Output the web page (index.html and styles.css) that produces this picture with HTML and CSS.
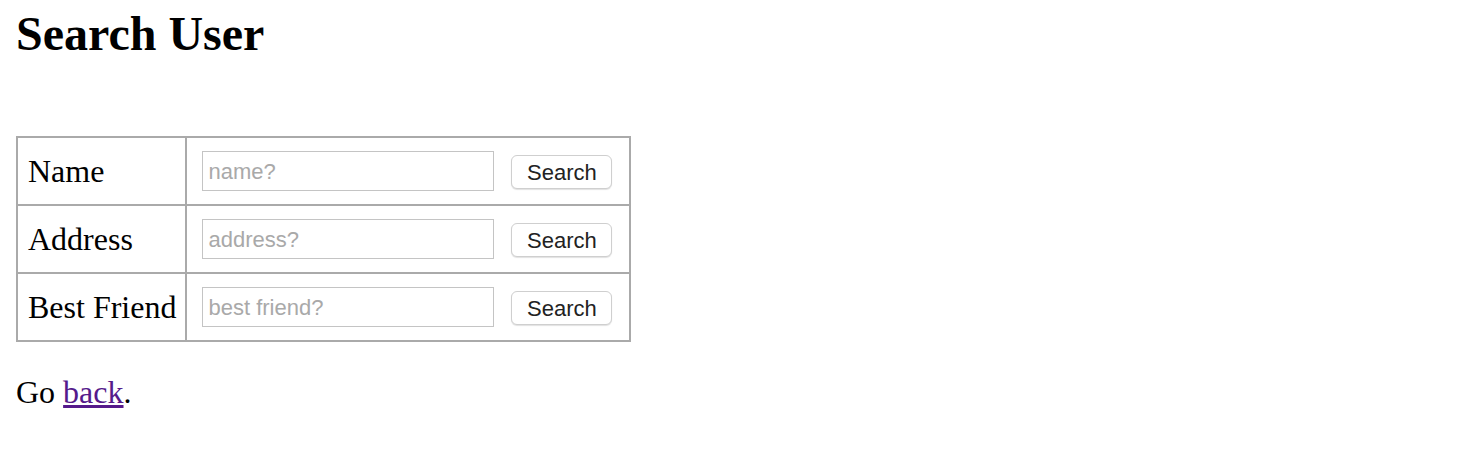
FILE: index.html
```html
<!DOCTYPE html>
<html>
<head>
<meta charset="utf-8">
<title>Search User</title>
<link rel="stylesheet" href="styles.css">
</head>
<body>
<h1 class="title">Search User</h1>
<table class="search-table">
  <tr>
    <td class="label">Name</td>
    <td class="field"><div class="field-row"><input class="text-input" type="text" placeholder="name?"><button class="btn">Search</button></div></td>
  </tr>
  <tr>
    <td class="label">Address</td>
    <td class="field"><div class="field-row"><input class="text-input" type="text" placeholder="address?"><button class="btn">Search</button></div></td>
  </tr>
  <tr>
    <td class="label">Best Friend</td>
    <td class="field"><div class="field-row"><input class="text-input" type="text" placeholder="best friend?"><button class="btn">Search</button></div></td>
  </tr>
</table>
<p class="back">Go <a class="back-link" href="#">back</a>.</p>
</body>
</html>
```

FILE: styles.css
```css
html, body {
  background: #ffffff;
}
body {
  margin: 0;
  padding: 7px 16px 0 16px;
  font-family: "Liberation Serif", "Times New Roman", serif;
  font-size: 32px;
  color: #000;
}
.title {
  margin: 0;
  font-size: 48px;
  line-height: 53px;
  font-weight: bold;
}
.search-table {
  margin-top: 76px;
  border-collapse: collapse;
  border: 2px solid #aaaaaa;
}
.search-table td {
  border: 2px solid #aaaaaa;
  height: 66px;
  padding: 0;
  vertical-align: middle;
}
.label {
  width: 148px;
  padding: 0 9px 0 10px !important;
  white-space: nowrap;
  font-size: 32px;
  line-height: 38px;
}
.field {
  padding: 0 17px 0 15px !important;
}
.field-row {
  display: flex;
  align-items: center;
  gap: 17px;
}
.text-input {
  box-sizing: border-box;
  width: 292px;
  height: 40px;
  margin: 0;
  padding: 2px 5px 0 5px;
  border: 1px solid #c4c4c4;
  border-radius: 0;
  font-family: "Liberation Sans", Arial, sans-serif;
  font-size: 22px;
  color: #000;
  outline: none;
}
.text-input::placeholder {
  color: #a9a9a9;
}
.btn {
  box-sizing: border-box;
  width: 101px;
  height: 34px;
  margin: 1px 0 0 0;
  padding: 3px 0 0 0;
  border: 1px solid #cfcfcf;
  border-radius: 6px;
  background: #ffffff;
  box-shadow: 0 1px 1px rgba(0, 0, 0, 0.12);
  font-family: "Liberation Sans", Arial, sans-serif;
  font-size: 22px;
  color: #222;
}
.back {
  margin: 32px 0 0 0;
  line-height: 37px;
}
.back-link {
  color: #551a8b;
}
```
